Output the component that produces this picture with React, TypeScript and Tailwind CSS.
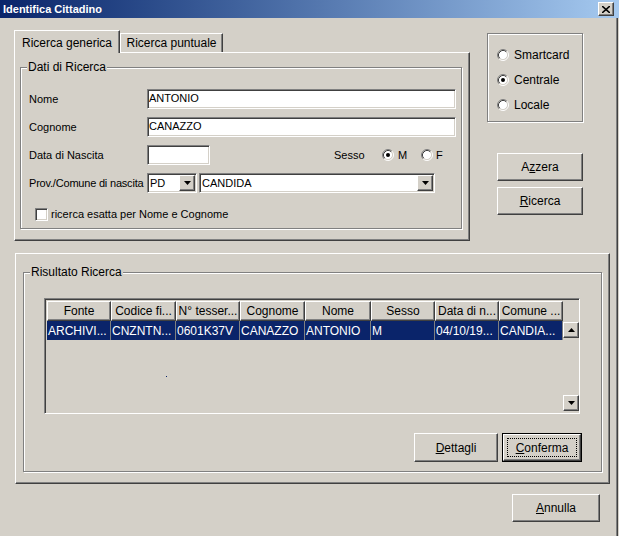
import type { ReactNode } from "react";

// classic win2000 bevels
const raised =
  "border border-t-white border-l-white border-r-[#404040] border-b-[#404040] shadow-[inset_-1px_-1px_0_#808080]";
const sunken =
  "border border-t-[#808080] border-l-[#808080] border-r-white border-b-white shadow-[inset_1px_1px_0_#404040,inset_-1px_-1px_0_#d4d0c8]";
const etched = "border border-[#808080] shadow-[inset_1px_1px_0_#ffffff,1px_1px_0_#ffffff]";

function Radio({ checked = false }: { checked?: boolean }) {
  return (
    <svg width="12" height="12" viewBox="0 0 12 12" className="shrink-0">
      <circle cx="6" cy="6" r="4.5" fill="#ffffff" />
      <path d="M2.11 9.89 A5.5 5.5 0 0 1 9.89 2.11" fill="none" stroke="#808080" />
      <path d="M9.89 2.11 A5.5 5.5 0 0 1 2.11 9.89" fill="none" stroke="#ffffff" />
      <path d="M2.82 9.18 A4.5 4.5 0 0 1 9.18 2.82" fill="none" stroke="#404040" />
      <path d="M9.18 2.82 A4.5 4.5 0 0 1 2.82 9.18" fill="none" stroke="#d4d0c8" />
      {checked && <circle cx="6" cy="6" r="2" fill="#000000" />}
    </svg>
  );
}

function Arrow({ up = false }: { up?: boolean }) {
  return (
    <svg width="7" height="4" viewBox="0 0 7 4">
      <path d={up ? "M3.5 0 L7 4 L0 4 Z" : "M0 0 L7 0 L3.5 4 Z"} fill="#000000" />
    </svg>
  );
}

function Button({
  children,
  className = "",
  isDefault = false,
}: {
  children: ReactNode;
  className?: string;
  isDefault?: boolean;
}) {
  if (isDefault) {
    return (
      <div className={`border border-black flex ${className}`}>
        <div className={`${raised} flex-1 flex items-center justify-center p-[3px]`}>
          <div className="border border-dotted border-black w-full h-full flex items-center justify-center">
            {children}
          </div>
        </div>
      </div>
    );
  }
  return (
    <div className={`${raised} flex items-center justify-center ${className}`}>{children}</div>
  );
}

function Combo({ value, className = "" }: { value: string; className?: string }) {
  return (
    <div className={`${sunken} bg-white h-[20px] flex items-stretch p-[1px] ${className}`}>
      <span className="flex-1 pl-[1px] leading-[16px] text-[11px]">{value}</span>
      <div className={`${raised} w-[16px] flex items-center justify-center bg-[#d4d0c8]`}>
        <Arrow />
      </div>
    </div>
  );
}

function Group({
  label,
  className = "",
  children,
}: {
  label: string;
  className?: string;
  children: ReactNode;
}) {
  return (
    <div className={`relative ${etched} ${className}`}>
      <span className="absolute -top-[8px] left-[6px] px-[1px] bg-[#d4d0c8] text-[12px] leading-[14px]">
        {label}
      </span>
      {children}
    </div>
  );
}

const cols = [
  { head: "Fonte", cell: "ARCHIVI...", w: "w-[64px]" },
  { head: "Codice fi...", cell: "CNZNTN...", w: "w-[65px]" },
  { head: "N° tesser...", cell: "0601K37V", w: "w-[64px]" },
  { head: "Cognome", cell: "CANAZZO", w: "w-[65px]" },
  { head: "Nome", cell: "ANTONIO", w: "w-[66px]" },
  { head: "Sesso", cell: "M", w: "w-[64px]" },
  { head: "Data di n...", cell: "04/10/19...", w: "w-[64px]" },
  { head: "Comune ...", cell: "CANDIA...", w: "w-[64px]" },
];

export default function App() {
  return (
    <div className="w-[619px] h-[536px] bg-[#d4d0c8] flex flex-col overflow-hidden text-black font-['Liberation_Sans',Arial,sans-serif] text-[12px]">
      {/* title bar */}
      <div className="h-[18px] shrink-0 bg-linear-to-r from-[#0a246a] to-[#a6caf0] flex items-center pl-[3px] pr-[5px]">
        <span className="text-white font-bold text-[11px] leading-none">Identifica Cittadino</span>
        <div className={`${raised} ml-auto w-[16px] h-[14px] bg-[#d4d0c8] flex items-center justify-center`}>
          <svg width="8" height="7" viewBox="0 0 8 7">
            <path d="M0 0 L8 7 M8 0 L0 7" stroke="#000000" strokeWidth="1.6" />
          </svg>
        </div>
      </div>

      <div className="flex-1 flex flex-col border-r border-r-[#404040] mr-[1px] shadow-[inset_-1px_0_0_#808080]">
        {/* top section */}
        <div className="flex pt-[12px] pl-[14px]">
          <div className="w-[456px] flex flex-col">
            <div className="h-[22px] flex items-end">
              <div className="relative z-10 -mb-[1px] w-[106px] h-[23px] bg-[#d4d0c8] border-t border-l border-t-white border-l-white border-r border-r-[#404040] shadow-[inset_-1px_0_0_#808080] flex items-start justify-center pt-[3px] text-[12px]">
                Ricerca generica
              </div>
              <div className="w-[103px] h-[19px] border-t border-l border-t-white border-l-white border-r border-r-[#404040] shadow-[inset_-1px_0_0_#808080] flex items-center justify-center text-[12px]">
                Ricerca puntuale
              </div>
            </div>
            <div className={`${raised} h-[189px] pl-[5px] pt-[14px]`}>
              <Group label="Dati di Ricerca" className="w-[442px] h-[162px] pl-[8px] pt-[21px] text-[11px]">
                <div className="flex flex-col gap-[8px]">
                  <div className="flex items-center h-[20px]">
                    <span className="w-[118px]">Nome</span>
                    <div className={`${sunken} bg-white w-[309px] h-[20px] pl-[1px] leading-[16px]`}>ANTONIO</div>
                  </div>
                  <div className="flex items-center h-[20px]">
                    <span className="w-[118px]">Cognome</span>
                    <div className={`${sunken} bg-white w-[309px] h-[20px] pl-[1px] leading-[16px]`}>CANAZZO</div>
                  </div>
                  <div className="flex items-center h-[20px]">
                    <span className="w-[118px]">Data di Nascita</span>
                    <div className={`${sunken} bg-white w-[63px] h-[20px]`} />
                    <span className="ml-[124px] w-[48px]">Sesso</span>
                    <Radio checked />
                    <span className="ml-[4px] w-[23px]">M</span>
                    <Radio />
                    <span className="ml-[3px]">F</span>
                  </div>
                  <div className="flex items-center h-[20px]">
                    <span className="w-[118px] tracking-[-0.2px] whitespace-nowrap">Prov./Comune di nascita</span>
                    <Combo value="PD" className="w-[50px]" />
                    <Combo value="CANDIDA" className="ml-[2px] w-[236px]" />
                  </div>
                </div>
                <div className="flex items-center mt-[15px] pl-[6px] h-[13px]">
                  <div className={`${sunken} bg-white w-[13px] h-[13px]`} />
                  <span className="ml-[3px]">ricerca esatta per Nome e Cognome</span>
                </div>
              </Group>
            </div>
          </div>

          <div className="ml-[17px] w-[96px] flex flex-col items-end">
            <div className={`${etched} mt-[3px] w-[96px] h-[89px] pt-[8px] pl-[9px] flex flex-col`}>
              <div className="h-[25px] flex items-center gap-[5px]">
                <Radio />
                <span>Smartcard</span>
              </div>
              <div className="h-[25px] flex items-center gap-[5px]">
                <Radio checked />
                <span>Centrale</span>
              </div>
              <div className="h-[25px] flex items-center gap-[5px]">
                <Radio />
                <span>Locale</span>
              </div>
            </div>
            <Button className="mt-[31px] w-[86px] h-[28px]">
              <span>
                A<u>z</u>zera
              </span>
            </Button>
            <Button className="mt-[6px] w-[86px] h-[28px]">
              <span>
                <u>R</u>icerca
              </span>
            </Button>
          </div>
        </div>

        {/* results */}
        <div className={`${raised} mt-[12px] ml-[15px] w-[595px] h-[231px] flex flex-col`}>
          <Group label="Risultato Ricerca" className="mt-[18px] ml-[7px] w-[579px] h-[200px] flex flex-col">
            <div className={`${sunken} relative mt-[25px] ml-[20px] w-[536px] h-[116px] p-[2px] flex flex-col`}>
              <div className="flex h-[20px]">
                {cols.map((c) => (
                  <div
                    key={c.head}
                    className={`${raised} ${c.w} h-[20px] flex items-center justify-center whitespace-nowrap overflow-hidden text-[12px]`}
                  >
                    {c.head}
                  </div>
                ))}
              </div>
              <div className="flex-1 flex">
                <div className="flex-1">
                  <div className="flex h-[19px] bg-[#0a246a] text-white">
                    {cols.map((c) => (
                      <div
                        key={c.head}
                        className={`${c.w} h-[19px] border-r border-r-[#808080] pl-[1px] flex items-center whitespace-nowrap overflow-hidden text-[12px]`}
                      >
                        {c.cell}
                      </div>
                    ))}
                  </div>
                </div>
                <div className="w-[16px] flex flex-col justify-between pt-[1px]">
                  <div className={`${raised} w-[16px] h-[16px] flex items-center justify-center`}>
                    <Arrow up />
                  </div>
                  <div className={`${raised} w-[16px] h-[16px] flex items-center justify-center`}>
                    <Arrow />
                  </div>
                </div>
              </div>
              <span className="absolute left-[121px] top-[77px] w-[1px] h-[1px] bg-[#0a246a]" />
            </div>
            <div className="flex justify-end gap-[4px] mt-[19px] mr-[19px]">
              <Button className="w-[84px] h-[29px]">
                <span>
                  <u>D</u>ettagli
                </span>
              </Button>
              <Button isDefault className="w-[80px] h-[29px]">
                <span>
                  <u>C</u>onferma
                </span>
              </Button>
            </div>
          </Group>
        </div>

        <div className="flex justify-end mt-[10px] mr-[17px]">
          <Button className="w-[88px] h-[28px]">
            <span>
              <u>A</u>nnulla
            </span>
          </Button>
        </div>
      </div>
    </div>
  );
}
